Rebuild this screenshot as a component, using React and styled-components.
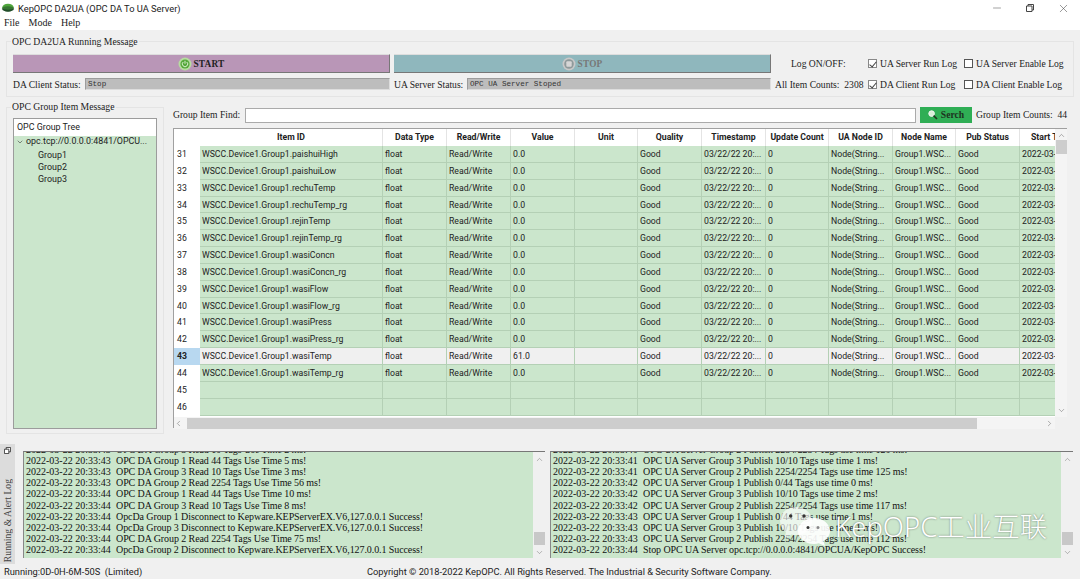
import React from 'react'
import styled, { createGlobalStyle } from 'styled-components'
import { ChevronDown, ChevronLeft, ChevronRight, ChevronUp, Minus, X } from 'lucide-react'

const GlobalStyle = createGlobalStyle`
  html, body { margin: 0; padding: 0; background: #f0f0f0; }
  * { box-sizing: border-box; }
`

const names = ['paishuiHigh', 'paishuiLow', 'rechuTemp', 'rechuTemp_rg', 'rejinTemp', 'rejinTemp_rg', 'wasiConcn', 'wasiConcn_rg', 'wasiFlow', 'wasiFlow_rg', 'wasiPress', 'wasiPress_rg', 'wasiTemp', 'wasiTemp_rg']
const headers = ['Item ID', 'Data Type', 'Read/Write', 'Value', 'Unit', 'Quality', 'Timestamp', 'Update Count', 'UA Node ID', 'Node Name', 'Pub Status', 'Start Time']

const leftLog = [
  '2022-03-22 20:33:43  OPC DA Group 3 Read 10 Tags Use Time 2 ms!',
  '2022-03-22 20:33:43  OPC DA Group 1 Read 44 Tags Use Time 5 ms!',
  '2022-03-22 20:33:43  OPC DA Group 3 Read 10 Tags Use Time 3 ms!',
  '2022-03-22 20:33:43  OPC DA Group 2 Read 2254 Tags Use Time 56 ms!',
  '2022-03-22 20:33:44  OPC DA Group 1 Read 44 Tags Use Time 10 ms!',
  '2022-03-22 20:33:44  OPC DA Group 3 Read 10 Tags Use Time 8 ms!',
  '2022-03-22 20:33:44  OpcDa Group 1 Disconnect to Kepware.KEPServerEX.V6,127.0.0.1 Success!',
  '2022-03-22 20:33:44  OpcDa Group 3 Disconnect to Kepware.KEPServerEX.V6,127.0.0.1 Success!',
  '2022-03-22 20:33:44  OPC DA Group 2 Read 2254 Tags Use Time 75 ms!',
  '2022-03-22 20:33:44  OpcDa Group 2 Disconnect to Kepware.KEPServerEX.V6,127.0.0.1 Success!',
]
const rightLog = [
  '2022-03-22 20:33:40  OPC UA Server Group 2 Publish 2254/2254 Tags use time 120 ms!',
  '2022-03-22 20:33:41  OPC UA Server Group 3 Publish 10/10 Tags use time 1 ms!',
  '2022-03-22 20:33:41  OPC UA Server Group 2 Publish 2254/2254 Tags use time 125 ms!',
  '2022-03-22 20:33:42  OPC UA Server Group 1 Publish 0/44 Tags use time 0 ms!',
  '2022-03-22 20:33:42  OPC UA Server Group 3 Publish 10/10 Tags use time 2 ms!',
  '2022-03-22 20:33:42  OPC UA Server Group 2 Publish 2254/2254 Tags use time 117 ms!',
  '2022-03-22 20:33:43  OPC UA Server Group 1 Publish 0/44 Tags use time 1 ms!',
  '2022-03-22 20:33:43  OPC UA Server Group 3 Publish 10/10 Tags use time 1 ms!',
  '2022-03-22 20:33:43  OPC UA Server Group 2 Publish 2254/2254 Tags use time 112 ms!',
  '2022-03-22 20:33:44  Stop OPC UA Server opc.tcp://0.0.0.0:4841/OPCUA/KepOPC Success!',
]

const COLS = '26px 183px 64px 64px 64px 63px 64px 64px 63px 64px 63px 64px 64px'

const LogLines = ({ lines }) => (
  <LogText>
    {lines.map((l, i) => (
      <LogLine key={i}>
        <LogTime>{l.slice(0, 19)}</LogTime>
        {l.slice(21)}
      </LogLine>
    ))}
  </LogText>
)

const App = () => {
  return (
    <Page>
      <GlobalStyle />
      <TitleBar>
        <Logo viewBox="0 0 16 12">
          <ellipse cx="8" cy="4.5" rx="6.5" ry="4" fill="#4fa63c" />
          <path d="M1 5.5 C2 11 14 11 15 5.5 C13 8 3 8 1 5.5Z" fill="#1d4a26" />
          <ellipse cx="8" cy="6.5" rx="7" ry="3" fill="#25502c" opacity="0.55" />
        </Logo>
        <TitleText>KepOPC DA2UA (OPC DA To UA Server)</TitleText>
        <WindowButtons>
          <Minus size={12} strokeWidth={1} />
          <RestoreIcon viewBox="0 0 10 10">
            <path d="M1.5 3h5.5v5.5h-5.5zM3 3v-1.5h5.5v5.5h-1.5" fill="none" stroke="#444" />
          </RestoreIcon>
          <X size={13} strokeWidth={1} />
        </WindowButtons>
      </TitleBar>
      <MenuBar><span>File</span><span>Mode</span><span>Help</span></MenuBar>

      <Body>
        <GroupBox>
          <Legend $top={-6}>OPC DA2UA Running Message</Legend>
          <ControlGrid>
            <ActionButton $bg="#b996b7" $color="#222">
              <StartIcon viewBox="0 0 14 14">
                <circle cx="7" cy="7" r="6.5" fill="#b7dca0" />
                <circle cx="7" cy="7" r="4.6" fill="#55a83a" />
                <path d="M7 3.8v3M5.2 5a2.7 2.7 0 1 0 3.6 0" fill="none" stroke="#e8f5df" strokeWidth="0.9" />
              </StartIcon>
              START
            </ActionButton>
            <ActionButton $bg="#8fb7bd" $color="#777">
              <StartIcon viewBox="0 0 14 14">
                <circle cx="7" cy="7" r="6.5" fill="#c9c9c9" />
                <circle cx="7" cy="7" r="4.8" fill="#8f9a9b" />
                <rect x="4.3" y="4.3" width="5.4" height="5.4" rx="1" fill="#d6d6d6" />
              </StartIcon>
              STOP
            </ActionButton>
            <LogOptions>
              <LogLabel>Log ON/OFF:</LogLabel>
              <CheckOption $w={96}><Check $on />UA Server Run Log</CheckOption>
              <CheckOption><Check />UA Server Enable Log</CheckOption>
            </LogOptions>
            <StatusPair>
              <StatusLabel $w={72}>DA Client Status:</StatusLabel>
              <StatusField>Stop</StatusField>
            </StatusPair>
            <StatusPair>
              <StatusLabel $w={73}>UA Server Status:</StatusLabel>
              <StatusField>OPC UA Server Stoped</StatusField>
            </StatusPair>
            <CountsRow>
              <Counts>All Item Counts:&nbsp; 2308</Counts>
              <CheckOption $w={96}><Check $on />DA Client Run Log</CheckOption>
              <CheckOption><Check />DA Client Enable Log</CheckOption>
            </CountsRow>
          </ControlGrid>
        </GroupBox>

        <MiddleRow>
          <TreeBox>
            <Legend $top={-7}>OPC Group Item Message</Legend>
            <Tree>
              <TreeHead>OPC Group Tree</TreeHead>
              <TreeBody>
                <TreeRoot><ChevronDown size={8} strokeWidth={1.5} />opc.tcp://0.0.0.0:4841/OPCU...</TreeRoot>
                <TreeLeaf>Group1</TreeLeaf>
                <TreeLeaf>Group2</TreeLeaf>
                <TreeLeaf>Group3</TreeLeaf>
              </TreeBody>
            </Tree>
          </TreeBox>

          <TablePanel>
            <FindRow>
              <FindLabel>Group Item Find:</FindLabel>
              <FindInput />
              <SearchButton>
                <SearchIcon viewBox="0 0 10 10">
                  <circle cx="3.6" cy="3.6" r="2.8" fill="#d8f0d8" stroke="#f4f4f4" />
                  <path d="M5.6 5.6l3.4 3.4" stroke="#20361f" strokeWidth="1.6" />
                </SearchIcon>
                Serch
              </SearchButton>
              <GroupCounts>Group Item Counts:&nbsp; 44</GroupCounts>
            </FindRow>
            <TableFrame>
              <TableView>
                <HeadRow>
                  <Corner />
                  {headers.map((h) => <HeadCell key={h}>{h}</HeadCell>)}
                </HeadRow>
                {names.map((n, i) => {
                  const active = i === 12
                  return (
                    <DataRow key={n} $active={active}>
                      <RowNo $active={active}>{31 + i}</RowNo>
                      <Cell>WSCC.Device1.Group1.{n}</Cell>
                      <Cell>float</Cell>
                      <Cell>Read/Write</Cell>
                      <Cell>{active ? '61.0' : '0.0'}</Cell>
                      <Cell />
                      <Cell>Good</Cell>
                      <Cell>03/22/22 20:...</Cell>
                      <Cell>0</Cell>
                      <Cell>Node(String...</Cell>
                      <Cell>Group1.WSC...</Cell>
                      <Cell>Good</Cell>
                      <Cell>2022-03-22</Cell>
                    </DataRow>
                  )
                })}
                {[45, 46].map((n) => (
                  <DataRow key={n}>
                    <RowNo>{n}</RowNo>
                    {headers.map((h) => <Cell key={h} />)}
                  </DataRow>
                ))}
              </TableView>
              <VScroll>
                <ChevronUp size={9} strokeWidth={1.2} />
                <VThumb $h={14} />
                <Grow />
                <ChevronDown size={9} strokeWidth={1.2} />
              </VScroll>
              <HScroll>
                <ChevronLeft size={9} strokeWidth={1.2} />
                <HThumb />
                <ChevronRight size={9} strokeWidth={1.2} />
              </HScroll>
              <ScrollCorner />
            </TableFrame>
          </TablePanel>
        </MiddleRow>

        <BottomRow>
          <DockTab>
            <DockIcon viewBox="0 0 8 8">
              <path d="M.5 2.5h5v5h-5zM2.5 2.5v-2h5v5h-2" fill="#fff" stroke="#333" />
            </DockIcon>
            <DockLabel>Running &amp; Alert Log</DockLabel>
          </DockTab>
          <LogPane $w={522} $gap={8}>
            <LogLines lines={leftLog} />
            <LogScroll />
          </LogPane>
          <LogPane $w={523} $gap={5}>
            <LogLines lines={rightLog} />
            <LogScroll />
            <Watermark>
              <WeChat viewBox="0 0 50 40">
                <path d="M16 0C7 0 0 6.200 0 14c0 4.500 2.400 8.300 6 11L4.500 31l7-3.500c1.400.4 3 .6 4.500.6 8.800 0 16-6.300 16-14.100S24.800 0 16 0z" fill="#fff" opacity="0.62" />
                <circle cx="10.700" cy="9" r="1.700" fill="#333" />
                <circle cx="24" cy="9" r="1.700" fill="#333" />
                <path d="M34 11c-8.800 0-16 5.800-16 13s7.200 13 16 13c1.700 0 3.300-.2 4.800-.7L45 39l-1.600-5C47.400 31.700 50 28 50 24c0-7.200-7.200-13-16-13z" fill="#fff" opacity="0.9" />
                <circle cx="28" cy="20.600" r="1.500" fill="#333" />
                <circle cx="38" cy="20.600" r="1.500" fill="#888" />
              </WeChat>
              <WatermarkText>KepOPC工业互联</WatermarkText>
            </Watermark>
          </LogPane>
        </BottomRow>
      </Body>

      <StatusBar>
        <RunInfo>Running:0D-0H-6M-50S&nbsp; (Limited)</RunInfo>
        <Copyright>Copyright © 2018-2022 KepOPC. All Rights Reserved. The Industrial &amp; Security Software Company.</Copyright>
      </StatusBar>
    </Page>
  )
}

const Page = styled.div`
  width: 1080px;
  height: 579px;
  overflow: hidden;
  display: flex;
  flex-direction: column;
  background: #f0f0f0;
  color: #222;
  font-family: "Liberation Serif", serif;
  font-size: 9.6px;
`
const TitleBar = styled.div`
  height: 16px;
  flex: none;
  background: #fff;
  display: flex;
  align-items: center;
  padding: 0 8px 0 1px;
  font-family: Roboto, sans-serif;
  font-size: 9.300px;
`
const Logo = styled.svg`
  width: 14px;
  height: 11px;
`
const TitleText = styled.span`
  margin-left: 3px;
  flex: 1;
`
const WindowButtons = styled.div`
  display: flex;
  align-items: center;
  gap: 22px;
  color: #444;
  margin-right: 2px;
`
const RestoreIcon = styled.svg`
  width: 10px;
  height: 10px;
`
const MenuBar = styled.div`
  height: 14px;
  flex: none;
  background: #fff;
  display: flex;
  gap: 9px;
  padding: 0 0 2px 4px;
  font-size: 10px;
  align-items: center;
`
const Body = styled.div`
  flex: 1;
  min-height: 0;
  display: flex;
  flex-direction: column;
  padding: 11px 6px 0 0;
`
const GroupBox = styled.div`
  margin: 0 0 0 6px;
  padding: 12px 6px 6px;
  height: 56px;
  border: 1px solid #e4e4e4;
  position: relative;
  min-width: 0;
`
const Legend = styled.div`
  position: absolute;
  top: ${(p) => p.$top}px;
  left: 4px;
  background: #f0f0f0;
  padding: 0 1px;
  font-size: 9.700px;
  line-height: 12px;
`
const ControlGrid = styled.div`
  display: grid;
  grid-template-columns: 377px 377px 1fr;
  grid-template-rows: 19px 12px;
  column-gap: 4px;
  row-gap: 5px;
`
const ActionButton = styled.div`
  background: ${(p) => p.$bg};
  color: ${(p) => p.$color};
  border-right: 1px solid #777;
  border-bottom: 1px solid #777;
  border-top: 1px solid #ddd;
  display: flex;
  align-items: center;
  justify-content: center;
  gap: 2px;
  font-weight: 700;
  font-size: 9.300px;
  letter-spacing: 0.2px;
`
const StartIcon = styled.svg`
  width: 14px;
  height: 14px;
`
const LogOptions = styled.div`
  display: flex;
  align-items: center;
  padding-left: 16px;
`
const LogLabel = styled.span`
  width: 77px;
`
const CheckOption = styled.label`
  display: flex;
  align-items: center;
  gap: 3px;
  width: ${(p) => (p.$w ? `${p.$w}px` : 'auto')};
  white-space: nowrap;
`
const Check = styled.span`
  width: 9px;
  height: 9px;
  flex: none;
  border: 1px solid ${(p) => (p.$on ? '#888' : '#555')};
  background: #fff;
  position: relative;
  &::after {
    content: '';
    display: ${(p) => (p.$on ? 'block' : 'none')};
    position: absolute;
    left: 2px;
    top: 0;
    width: 3px;
    height: 6px;
    border: solid #444;
    border-width: 0 1px 1px 0;
    transform: rotate(40deg);
  }
`
const StatusPair = styled.div`
  display: flex;
  align-items: center;
  white-space: nowrap;
`
const StatusLabel = styled.span`
  width: ${(p) => p.$w}px;
  flex: none;
`
const StatusField = styled.div`
  flex: 1;
  height: 12px;
  background: #bdbdbd;
  border: 1px solid #9c9c9c;
  border-bottom-color: #ddd;
  border-right-color: #ddd;
  font-family: "Liberation Mono", monospace;
  font-size: 7.600px;
  line-height: 11px;
  padding-left: 2px;
  color: #333;
`
const CountsRow = styled.div`
  display: flex;
  align-items: center;
`
const Counts = styled.span`
  width: 93px;
  white-space: nowrap;
`
const MiddleRow = styled.div`
  display: flex;
  margin-top: 10px;
  height: 327px;
  flex: none;
`
const TreeBox = styled.div`
  width: 158px;
  margin-left: 6px;
  flex: none;
  position: relative;
  border: 1px solid #e4e4e4;
  padding: 10px 6px 4px;
  display: flex;
`
const Tree = styled.div`
  flex: 1;
  border: 1px solid #9c9c9c;
  display: flex;
  flex-direction: column;
  font-family: Roboto, sans-serif;
  font-size: 8.900px;
`
const TreeHead = styled.div`
  height: 17px;
  background: #fff;
  line-height: 17px;
  padding-left: 3px;
`
const TreeBody = styled.div`
  flex: 1;
  background: #cbe6cc;
`
const TreeRoot = styled.div`
  height: 11px;
  line-height: 11px;
  margin-bottom: 1.500px;
  display: flex;
  align-items: center;
  gap: 2px;
  padding-left: 2px;
  white-space: nowrap;
`
const TreeLeaf = styled.div`
  height: 12.200px;
  line-height: 12.200px;
  padding-left: 24px;
`
const TablePanel = styled.div`
  flex: 1;
  min-width: 0;
  margin-left: 9px;
  display: flex;
  flex-direction: column;
`
const FindRow = styled.div`
  height: 21px;
  flex: none;
  display: flex;
  align-items: flex-start;
  line-height: 16px;
  white-space: nowrap;
`
const FindLabel = styled.span`
  width: 72px;
  flex: none;
`
const FindInput = styled.div`
  width: 671px;
  height: 15px;
  margin-top: 1px;
  background: #fff;
  border: 1px solid #aaa;
`
const SearchButton = styled.div`
  width: 52px;
  height: 16px;
  margin-left: 4px;
  background: #2fae55;
  color: #1d3320;
  font-weight: 700;
  font-size: 9.600px;
  display: flex;
  align-items: center;
  justify-content: center;
  gap: 3px;
`
const SearchIcon = styled.svg`
  width: 10px;
  height: 10px;
`
const GroupCounts = styled.span`
  margin-left: 4px;
`
const TableFrame = styled.div`
  width: 894px;
  height: 300px;
  flex: none;
  display: grid;
  grid-template-columns: 881px 12px;
  grid-template-rows: 288px 12px;
  border-top: 1px solid #a0a0a0;
  border-left: 1px solid #a0a0a0;
  background: #f0f0f0;
  font-family: Roboto, sans-serif;
  font-size: 8.700px;
`
const TableView = styled.div`
  overflow: hidden;
  background: #fff;
`
const HeadRow = styled.div`
  display: grid;
  grid-template-columns: ${COLS};
  height: 17px;
  background: #fff;
`
const Corner = styled.div`
  background: #fff;
`
const HeadCell = styled.div`
  font-weight: 700;
  text-align: center;
  line-height: 17px;
  white-space: nowrap;
  overflow: hidden;
  color: #222;
  border-right: 1px solid #e4e4e4;
`
const DataRow = styled.div`
  display: grid;
  grid-template-columns: ${COLS};
  height: 16.850px;
  background: ${(p) => (p.$active ? '#f0f0f0' : '#cbe6cc')};
`
const RowNo = styled.div`
  background: ${(p) => (p.$active ? '#b8d8f0' : '#fff')};
  font-weight: ${(p) => (p.$active ? 700 : 400)};
  line-height: 16px;
  padding-left: 3px;
`
const Cell = styled.div`
  line-height: 16px;
  padding-left: 2px;
  white-space: nowrap;
  overflow: hidden;
  border-right: 1px solid #b4d0b5;
  border-bottom: 1px solid #b4d0b5;
`
const VScroll = styled.div`
  display: flex;
  flex-direction: column;
  align-items: center;
  padding: 2px 0;
  background: #f4f4f4;
  color: #555;
`
const VThumb = styled.div`
  width: 11px;
  height: ${(p) => p.$h}px;
  background: #cdcdcd;
`
const Grow = styled.div`
  flex: 1;
`
const HScroll = styled.div`
  display: flex;
  align-items: center;
  background: #f4f4f4;
  color: #555;
`
const HThumb = styled.div`
  width: 790px;
  height: 11px;
  margin: 0 68px 0 4px;
  background: #cdcdcd;
`
const ScrollCorner = styled.div`
  background: #f0f0f0;
`
const BottomRow = styled.div`
  display: flex;
  margin-top: 10px;
  height: 121px;
  flex: none;
`
const DockTab = styled.div`
  width: 15px;
  height: 120px;
  flex: none;
  background: #dcdcdc;
  display: flex;
  flex-direction: column;
  align-items: center;
  justify-content: space-between;
  padding: 3px 0 2px;
`
const DockIcon = styled.svg`
  width: 7px;
  height: 7px;
`
const DockLabel = styled.span`
  writing-mode: vertical-rl;
  transform: rotate(180deg);
  font-size: 9.700px;
  white-space: nowrap;
  color: #444;
`
const LogPane = styled.div`
  width: ${(p) => p.$w}px;
  height: 107px;
  margin: 7px 0 0 ${(p) => p.$gap}px;
  position: relative;
  display: flex;
  background: #cbe6cc;
  border-top: 1px solid #777;
  border-left: 1px solid #888;
`
const LogText = styled.div`
  flex: 1;
  min-width: 0;
  overflow: hidden;
  display: flex;
  flex-direction: column;
  justify-content: flex-end;
  padding: 0 0 3px 2px;
`
const LogLine = styled.div`
  height: 11.100px;
  flex: none;
  line-height: 11.100px;
  font-size: 10px;
  letter-spacing: -0.090px;
  white-space: nowrap;
  color: #111;
`
const LogTime = styled.span`
  display: inline-block;
  width: 90px;
  letter-spacing: 0;
`
const LogScrollTrack = styled.div`
  width: 12px;
  flex: none;
  background: #f0f0f0;
  display: flex;
  flex-direction: column;
  align-items: center;
  padding: 3px 0 1px;
  color: #666;
`
const LogThumb = styled.div`
  width: 11px;
  height: 13px;
  margin-bottom: 3px;
  background: #c8c8c8;
`
const LogScroll = () => (
  <LogScrollTrack>
    <ChevronUp size={9} strokeWidth={1.2} />
    <Grow />
    <LogThumb />
    <ChevronDown size={9} strokeWidth={1.2} />
  </LogScrollTrack>
)
const Watermark = styled.div`
  position: absolute;
  left: 229px;
  top: 55px;
  display: flex;
  align-items: center;
`
const WeChat = styled.svg`
  width: 50px;
  height: 40px;
  flex: none;
`
const WatermarkText = styled.span`
  margin-left: 5px;
  color: #fff;
  text-shadow: 0 0 2px rgba(0, 0, 0, 0.5);
  font-family: "Noto Sans", "Noto Sans CJK SC", sans-serif;
  font-weight: 300;
  font-size: 27.500px;
  line-height: 30px;
  white-space: nowrap;
`
const StatusBar = styled.div`
  height: 14px;
  flex: none;
  display: flex;
  align-items: center;
  font-family: Roboto, sans-serif;
  font-size: 9.300px;
  padding: 0 0 1px 4px;
`
const RunInfo = styled.span`
  width: 363px;
`
const Copyright = styled.span`
  white-space: nowrap;
`

export default App
